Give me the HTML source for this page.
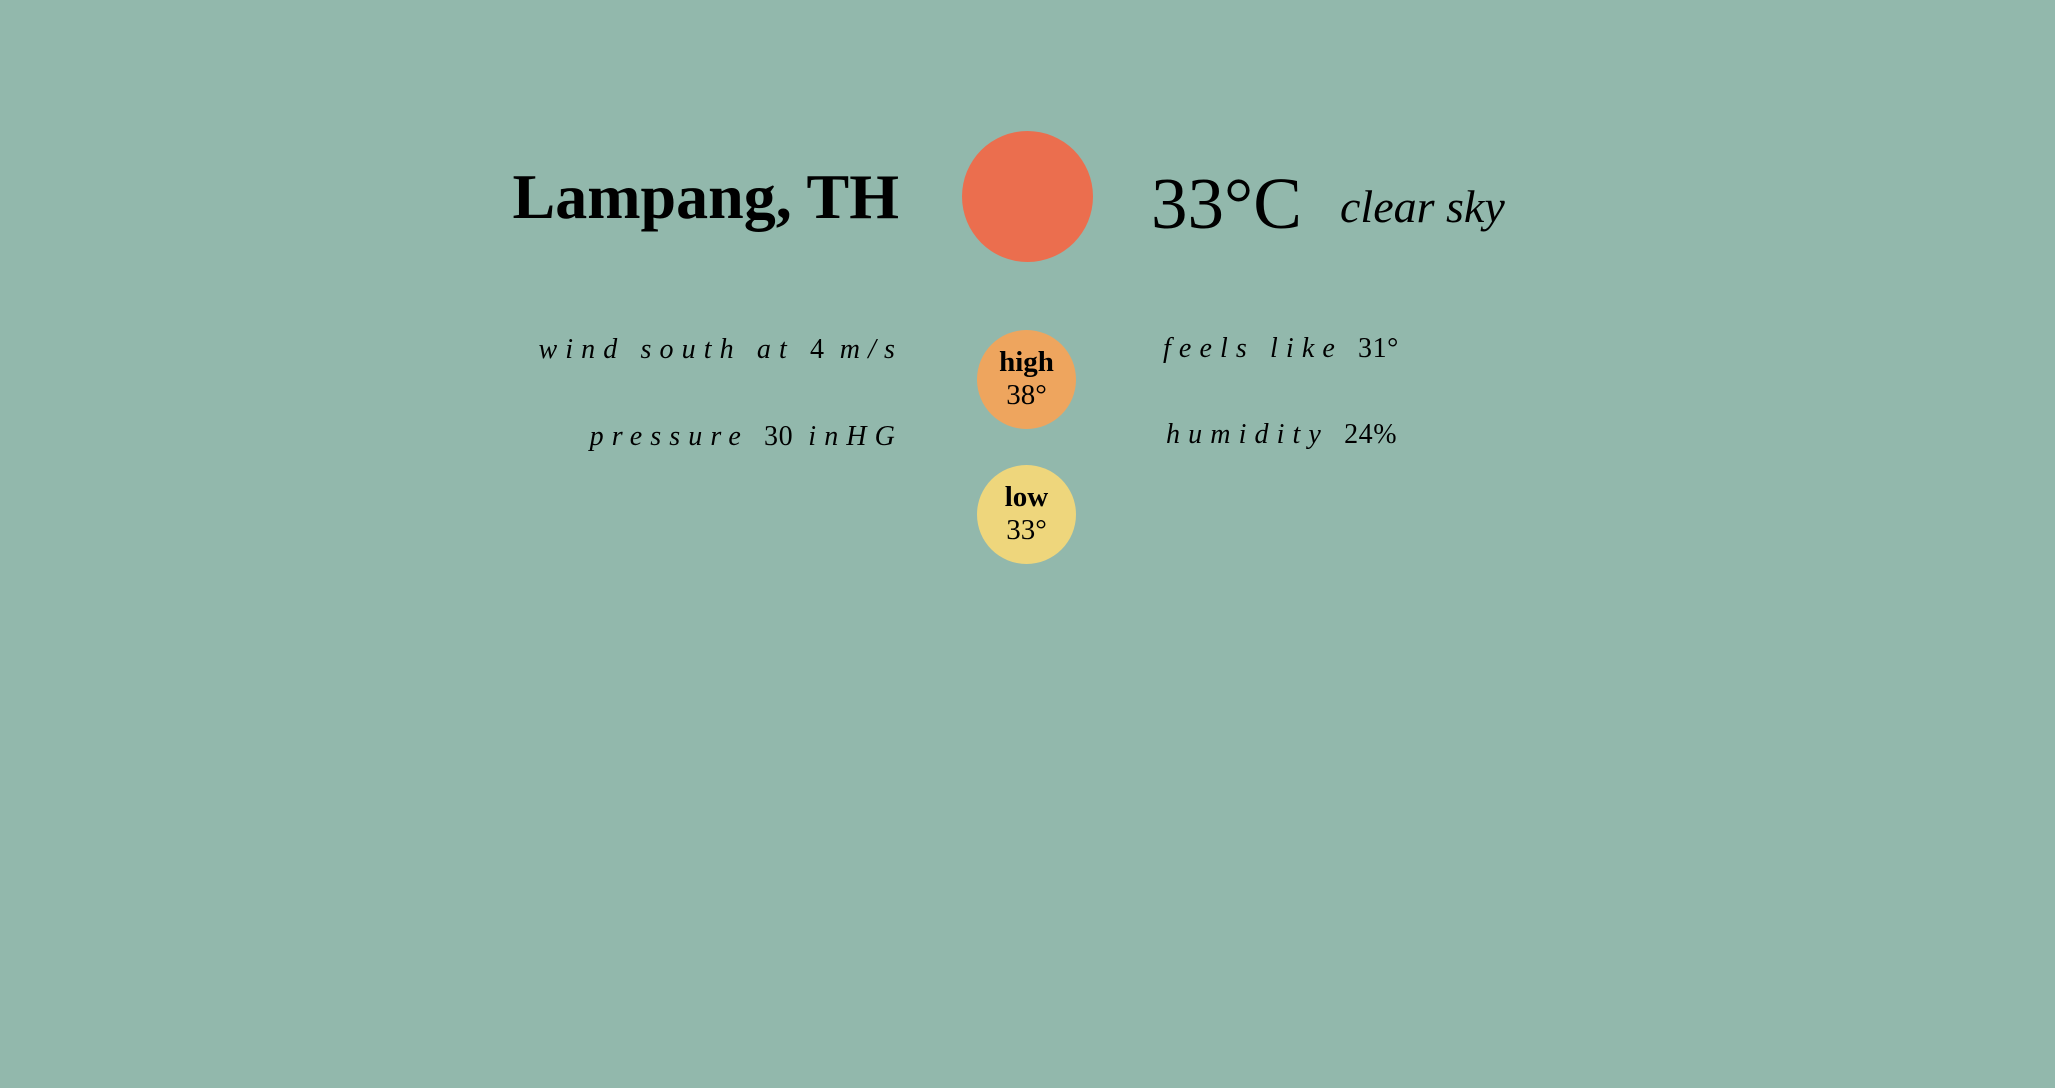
<!DOCTYPE html>
<html><head><meta charset="utf-8"><style>
html,body{margin:0;padding:0;width:2055px;height:1088px;background:#92b8ac;overflow:hidden;font-family:"Liberation Serif",serif;color:#000}
.a{position:absolute;white-space:nowrap;line-height:1}
.c{position:absolute;border-radius:50%;text-align:center}
.sp{font-style:italic;letter-spacing:0.29em;font-size:28px}
.n{font-style:normal;letter-spacing:0.02em}
</style></head><body>
<div class="a" style="right:1156px;top:165px;font-size:64px;font-weight:bold;">Lampang, TH</div>
<div class="c" style="left:962px;top:131px;width:131px;height:131px;background:#eb6e4e;"></div>
<div class="a" style="left:1151px;top:167px;font-size:73px;">33°C</div>
<div class="a" style="left:1340px;top:184px;font-size:46px;font-style:italic;">clear sky</div>
<div class="a sp" style="right:1152px;top:336px;">wind south at <span class="n">4</span>&nbsp;m/s</div>
<div class="a sp" style="right:1152px;top:423px;">pressure <span class="n">30</span>&nbsp;inHG</div>
<div class="a sp" style="left:1163px;top:335px;">feels like <span class="n">31°</span></div>
<div class="a sp" style="left:1166px;top:421px;">humidity <span class="n">24%</span></div>
<div class="c" style="left:977px;top:330px;width:99px;height:99px;background:#eea55e;">
<div style="font-size:29px;line-height:33px;padding-top:16px;"><b>high</b><br>38°</div></div>
<div class="c" style="left:977px;top:465px;width:99px;height:99px;background:#eed67c;">
<div style="font-size:29px;line-height:33px;padding-top:16px;"><b>low</b><br>33°</div></div>
</body></html>
